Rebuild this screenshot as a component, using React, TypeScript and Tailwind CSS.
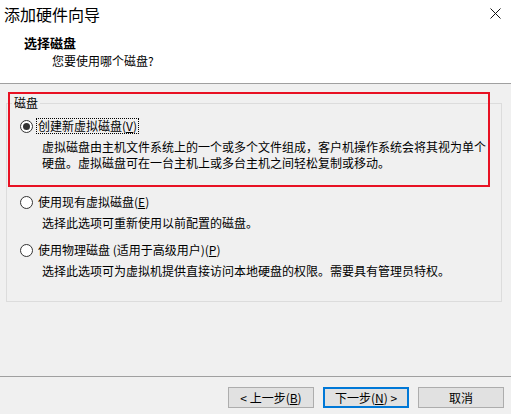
import React, { FC } from "react";

const font = { fontFamily: '"Noto Sans CJK SC", "Noto Sans", sans-serif' };

const Radio: FC<{ checked?: boolean }> = ({ checked }) => (
  <svg width="13" height="13" viewBox="0 0 13 13" className="shrink-0">
    <circle cx="6.5" cy="6.5" r="6" fill="#fff" stroke="#333" strokeWidth="1" />
    {checked && <circle cx="6.5" cy="6.5" r="3.5" fill="#333" />}
  </svg>
);

interface OptionProps {
  label: React.ReactNode;
  desc: React.ReactNode;
  checked?: boolean;
  focused?: boolean;
  className?: string;
}

const Option: FC<OptionProps> = ({ label, desc, checked, focused, className }) => (
  <div className={className}>
    <div className="flex items-center h-[16px] pl-[13px]">
      <Radio checked={checked} />
      <span
        className={
          "ml-[3px] px-[1px] leading-[14px] border border-dotted " +
          (focused ? "border-black" : "border-transparent")
        }
      >
        {label}
      </span>
    </div>
    <p className="mt-[5px] pl-[35px] w-[483px] leading-[16px]">{desc}</p>
  </div>
);

const Button: FC<{ children: React.ReactNode; primary?: boolean }> = ({ children, primary }) => (
  <button
    className={
      "w-[86px] h-[21px] bg-[#e1e1e1] text-[12px] leading-none flex items-center justify-center " +
      (primary ? "border-2 border-[#0078d7]" : "border border-[#adadad]")
    }
  >
    {children}
  </button>
);

export default function App() {
  return (
    <div
      className="relative w-[511px] h-[414px] bg-[#f0f0f0] text-black text-[12px] flex flex-col overflow-hidden"
      style={font}
    >
      {/* header */}
      <div className="h-[84px] bg-white border-b border-[#a0a0a0] relative">
        <div className="pt-[4px] pl-[4px] text-[16px] leading-[20px]">添加硬件向导</div>
        <svg
          className="absolute right-[10px] top-[8px]"
          width="11"
          height="11"
          viewBox="0 0 11 11"
        >
          <path d="M0.5 0.5 L10.5 10.5 M10.5 0.5 L0.5 10.5" stroke="#111" strokeWidth="1" />
        </svg>
        <div className="mt-[11px] pl-[24px] text-[13px] leading-[16px] font-bold">选择磁盘</div>
        <div className="mt-[2px] pl-[52px] leading-[16px]">您要使用哪个磁盘?</div>
      </div>

      {/* group box */}
      <fieldset className="mt-[11px] ml-[6px] w-[496px] border border-[#dcdcdc] pb-[22px]">
        <legend className="ml-[5px] px-[2px] leading-[16px]">磁盘</legend>
        <Option
          className="mt-[7px]"
          checked
          focused
          label={
            <>
              创建新虚拟磁盘(<u>V</u>)
            </>
          }
          desc="虚拟磁盘由主机文件系统上的一个或多个文件组成，客户机操作系统会将其视为单个硬盘。虚拟磁盘可在一台主机上或多台主机之间轻松复制或移动。"
        />
        <Option
          className="mt-[23px]"
          label={
            <>
              使用现有虚拟磁盘(<u>E</u>)
            </>
          }
          desc="选择此选项可重新使用以前配置的磁盘。"
        />
        <Option
          className="mt-[11px]"
          label={
            <>
              使用物理磁盘 (适用于高级用户)(<u>P</u>)
            </>
          }
          desc="选择此选项可为虚拟机提供直接访问本地硬盘的权限。需要具有管理员特权。"
        />
      </fieldset>

      {/* footer */}
      <div className="mt-auto border-t border-[#a0a0a0] pt-[10px] pb-[6px] pr-[7px] flex justify-end gap-[9px]">
        <Button>
          &lt; 上一步(<u>B</u>)
        </Button>
        <Button primary>
          下一步(<u>N</u>) &gt;
        </Button>
        <Button>取消</Button>
      </div>

      {/* red highlight annotation */}
      <div className="absolute left-[8px] top-[92px] w-[482px] h-[95px] border-2 border-[#e81123] pointer-events-none" />
    </div>
  );
}
